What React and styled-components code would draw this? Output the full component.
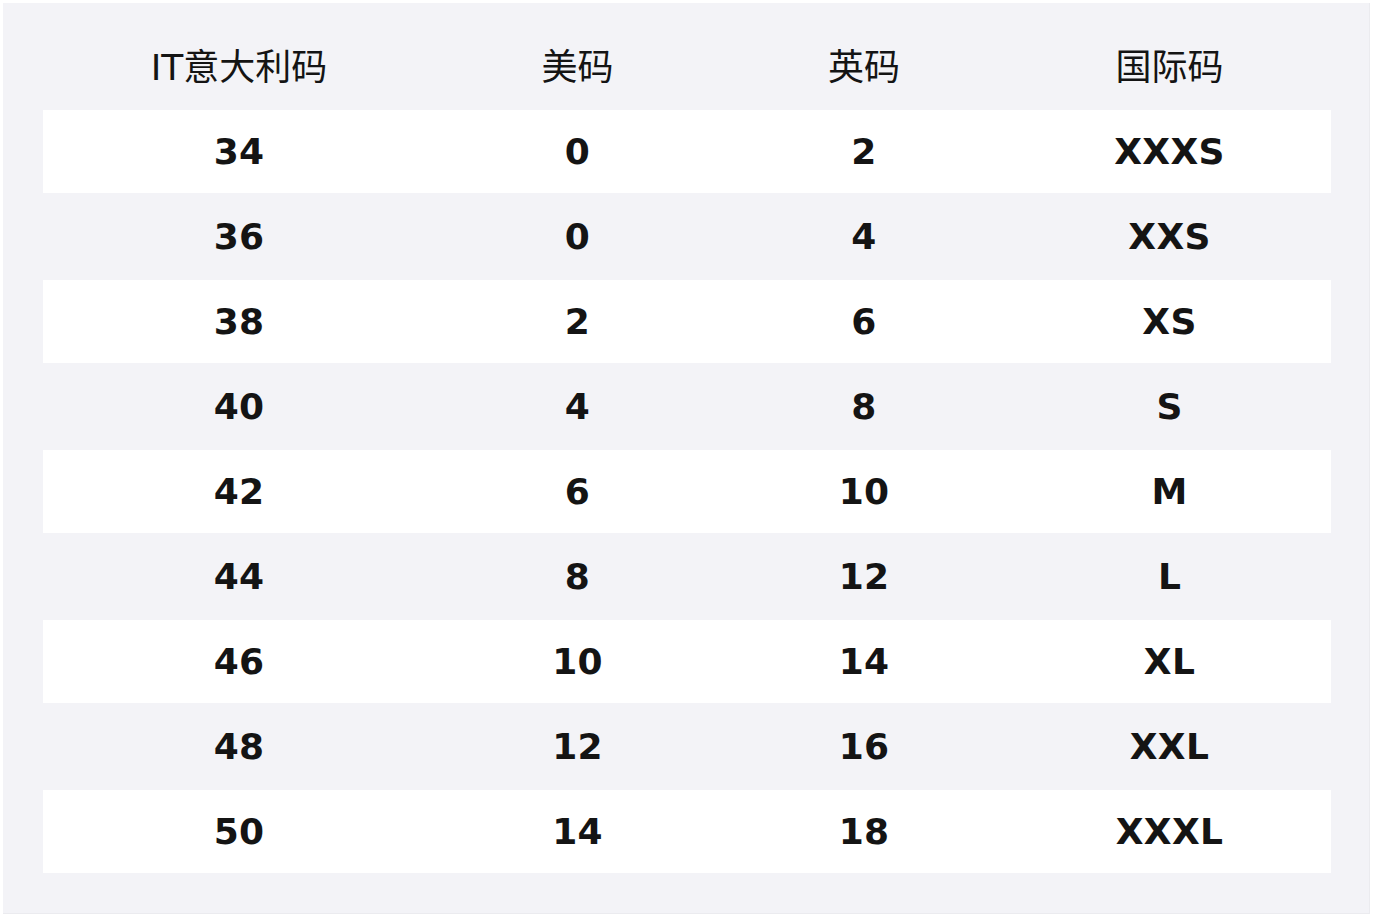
import React from "react";
import styled, { createGlobalStyle } from "styled-components";

const Global = createGlobalStyle`
  html, body { margin: 0; padding: 0; background: #ffffff; }
  body { font-family: "DejaVu Sans", "Noto Sans CJK SC", sans-serif; }
`;

const Page = styled.div`
  padding: 3px 4px 4px 3px;
  width: 1374px;
  height: 918px;
  box-sizing: border-box;
`;

const Panel = styled.div`
  width: 1367px;
  height: 911px;
  box-sizing: border-box;
  background: #f3f3f7;
  border-right: 1px solid #ebebef;
  border-bottom: 1px solid #ebebef;
  padding: 20px 39px 0 40px;
`;

const Table = styled.table`
  border-collapse: separate;
  border-spacing: 0 2px;
  table-layout: fixed;
  width: 1288px;
  color: #141414;
`;

const HeadCell = styled.th`
  height: 83px;
  padding: 0 0 6px;
  box-sizing: border-box;
  font-size: 36px;
  font-weight: 400;
  text-align: center;
  vertical-align: middle;
  font-family: "DejaVu Sans", "Noto Sans CJK SC", sans-serif;
`;

const Row = styled.tr`
  background: ${(p) => (p.$striped ? "#ffffff" : "transparent")};
`;

const Cell = styled.td`
  height: 83px;
  padding: 0;
  font-size: 36px;
  font-weight: 700;
  text-align: center;
  vertical-align: middle;
  letter-spacing: 0.3px;
`;

const headers = ["IT意大利码", "美码", "英码", "国际码"];
const rows = [
  ["34", "0", "2", "XXXS"],
  ["36", "0", "4", "XXS"],
  ["38", "2", "6", "XS"],
  ["40", "4", "8", "S"],
  ["42", "6", "10", "M"],
  ["44", "8", "12", "L"],
  ["46", "10", "14", "XL"],
  ["48", "12", "16", "XXL"],
  ["50", "14", "18", "XXXL"],
];
const widths = [392, 285, 288, 323];

export default function App() {
  return (
    <Page>
      <Global />
      <Panel>
        <Table>
          <colgroup>
            {widths.map((w, i) => (
              <col key={i} style={{ width: w }} />
            ))}
          </colgroup>
          <thead>
            <tr>
              {headers.map((h) => (
                <HeadCell key={h}>{h}</HeadCell>
              ))}
            </tr>
          </thead>
          <tbody>
            {rows.map((r, i) => (
              <Row key={i} $striped={i % 2 === 0}>
                {r.map((c, j) => (
                  <Cell key={j}>{c}</Cell>
                ))}
              </Row>
            ))}
          </tbody>
        </Table>
      </Panel>
    </Page>
  );
}
